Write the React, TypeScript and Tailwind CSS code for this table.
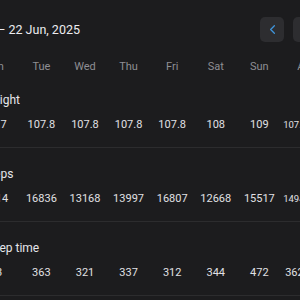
import React from 'react';
import { ChevronLeft, ChevronRight } from 'lucide-react';

const days = ['Mon', 'Tue', 'Wed', 'Thu', 'Fri', 'Sat', 'Sun'];

const rows = [
  { label: 'Weight', values: ['106.7', '107.8', '107.8', '107.8', '107.8', '108', '109'], avg: '107.84', smallAvg: true },
  { label: 'Steps', values: ['15614', '16836', '13168', '13997', '16807', '12668', '15517'], avg: '14944', smallAvg: true },
  { label: 'Sleep time', values: ['383', '363', '321', '337', '312', '344', '472'], avg: '362', smallAvg: false },
];

const Cell = ({ i, children }: { i: number; children: React.ReactNode }) => (
  <div className={i === 0 ? 'w-[48.6px] shrink-0 pr-[5px] text-center' : 'w-[43.6px] shrink-0 text-center'}>
    {children}
  </div>
);

export default function App() {
  return (
    <div className="w-[300px] h-[300px] overflow-hidden bg-[#1c1c1e] font-['Roboto',sans-serif]">
      <div className="ml-[-29px] w-[360px]">
        {/* header */}
        <div className="flex items-center pt-[17px] pl-[9px] pr-[14px]">
          <h1 className="flex-1 text-[12.5px] leading-[25px] text-[#ececf0]">16 – 22 Jun, 2025</h1>
          <div className="flex gap-[9px]">
            <button className="w-[24px] h-[25px] rounded-[5px] bg-[#2d2d30] flex items-center justify-center">
              <ChevronLeft size={15} strokeWidth={2} color="#3f95dc" />
            </button>
            <button className="w-[24px] h-[25px] rounded-[5px] bg-[#2d2d30] flex items-center justify-center">
              <ChevronRight size={15} strokeWidth={2} color="#3f95dc" />
            </button>
          </div>
        </div>

        {/* day names */}
        <div className="flex mt-[17px] h-[15px] text-[11px] leading-[16px] text-[#8e8e93]">
          {days.map((d, i) => (
            <Cell key={d} i={i}>{d}</Cell>
          ))}
          <div className="pl-[16px]">Avg</div>
        </div>

        {rows.map((r) => (
          <div key={r.label} className="pt-[18px] pb-[14px] border-b border-[#2c2c2e]">
            <div className="pl-[12px] text-[12px] leading-[16px] text-[#e5e5ea]">{r.label}</div>
            <div className="flex mt-[9px] h-[16px] items-center text-[11px] leading-[16px] text-[#e0e0e4]">
              {r.values.map((v, i) => (
                <Cell key={i} i={i}>{v}</Cell>
              ))}
              <div className={r.smallAvg ? 'pl-[2px] text-[9.5px]' : 'pl-[4px]'}>{r.avg}</div>
            </div>
          </div>
        ))}
      </div>
    </div>
  );
}
